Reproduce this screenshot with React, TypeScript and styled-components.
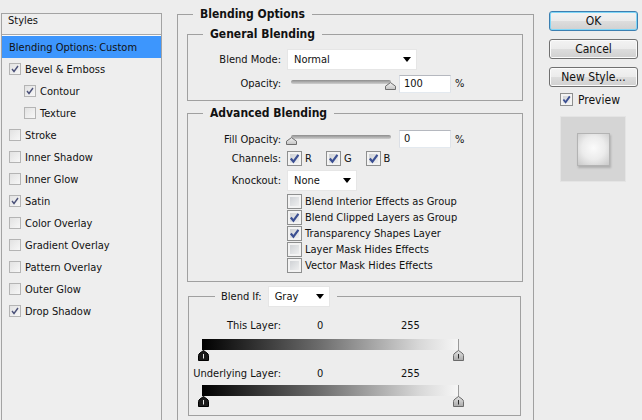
import React from "react";
import styled, { createGlobalStyle } from "styled-components";

const FONT = `"DejaVu Sans Condensed", "DejaVu Sans", "Liberation Sans", sans-serif`;

const GlobalStyle = createGlobalStyle`
  html, body { margin: 0; padding: 0; background: #ededed; }
  body { font-family: ${FONT}; font-stretch: condensed; font-size: 11px; color: #111; }
  * { box-sizing: border-box; }
`;

const Dialog = styled.div`
  display: flex;
  align-items: flex-start;
  width: 642px;
  height: 420px;
  overflow: hidden;
  background: #ededed;
`;

/* ---------- Styles list ---------- */
const StylesPanel = styled.div`
  flex: none;
  width: 161px;
  height: 440px;
  margin: 13px 0 0 1px;
  border: 1px solid #a3a3a3;
  background: #eeeeee;
`;

const PanelHeader = styled.div`
  height: 21px;
  padding: 0 0 0 6px;
  line-height: 14px;
  border-bottom: 1px solid #a9a9a9;
  box-shadow: 0 1px 0 #fbfbfb;
  margin-bottom: 1px;
`;

const StyleRow = styled.div<{ $indent?: boolean; $active?: boolean }>`
  height: 22px;
  display: flex;
  align-items: center;
  gap: 4px;
  padding-left: ${(p) => (p.$indent ? 22 : 7)}px;
  background: ${(p) => (p.$active ? "#3d96fd" : "transparent")};
  white-space: nowrap;
`;

const SmallBox = styled.span`
  flex: none;
  width: 12px;
  height: 12px;
  border: 1px solid #b4b4b4;
  background: linear-gradient(135deg, #e2e2e2, #f7f7f7);
  display: flex;
  align-items: center;
  justify-content: center;
`;

const WinBox = styled.span<{ $size: number }>`
  flex: none;
  width: ${(p) => p.$size}px;
  height: ${(p) => p.$size}px;
  border: 1px solid #8e8f8f;
  background: linear-gradient(135deg, #c9ccd0, #f5f5f5);
  box-shadow: inset 0 0 0 2px #f3f3f3;
  display: flex;
  align-items: center;
  justify-content: center;
`;

function SmallCheck({ checked }: { checked: boolean }) {
  return (
    <SmallBox>
      {checked && (
        <svg width="10" height="10" viewBox="0 0 10 10">
          <path d="M2 5 L4 7.5 L8 2" fill="none" stroke="#4b5179" strokeWidth="1.4" />
        </svg>
      )}
    </SmallBox>
  );
}

function WinCheck({ checked, size = 14 }: { checked: boolean; size?: number }) {
  return (
    <WinBox $size={size}>
      {checked && (
        <svg width={size - 2} height={size - 2} viewBox="0 0 12 12">
          <path d="M2.6 6 L5 9 L9.6 2.6" fill="none" stroke="#3b4f92" strokeWidth="2" />
        </svg>
      )}
    </WinBox>
  );
}

/* ---------- Group boxes ---------- */
const MainGroup = styled.fieldset`
  flex: none;
  min-width: 0;
  width: 357px;
  height: 440px;
  margin: 7px 0 0 15px;
  padding: 5px 10px 0 9px;
  border: 1px solid #a0a0a0;
`;

const GroupBody = styled.div`
  display: flex;
  flex-direction: column;
`;

const GroupTitle = styled.legend<{ $inset: number }>`
  margin-left: ${(p) => p.$inset}px;
  padding: 0 7px;
  font-weight: bold;
  font-size: 12px;
  line-height: 15px;
  color: #111;
`;

const SubGroup = styled.fieldset<{ $top?: number; $pt: number; $pb: number }>`
  min-width: 0;
  margin: ${(p) => p.$top ?? 0}px 0 0 0;
  padding: ${(p) => p.$pt}px 0 ${(p) => p.$pb}px 0;
  border: 1px solid #a0a0a0;
  display: block;
`;

const BlendIfGroup = styled.fieldset`
  min-width: 0;
  margin: 4px 2px 0 1px;
  padding: 11px 0 8px 0;
  border: 1px solid #a0a0a0;
`;

const BlendIfLegend = styled.legend`
  margin-left: 26px;
  padding: 0 7px 0 6px;
  display: flex;
  align-items: center;
  gap: 6px;
  height: 21px;
`;

const FormRow = styled.div<{ $h: number; $mt?: number }>`
  display: flex;
  align-items: center;
  height: ${(p) => p.$h}px;
  margin-top: ${(p) => p.$mt ?? 0}px;
  white-space: nowrap;
`;

const FieldLabel = styled.span`
  flex: none;
  width: 93px;
  margin-right: 6px;
  text-align: right;
`;

const Dropdown = styled.div<{ $w: number }>`
  flex: none;
  width: ${(p) => p.$w}px;
  height: 21px;
  background: #fff;
  border: 1px solid #e6e6e6;
  display: flex;
  align-items: center;
  justify-content: space-between;
  padding: 0 5px 0 6px;
`;

const DropArrow = styled.span`
  width: 0;
  height: 0;
  border-left: 4.5px solid transparent;
  border-right: 4.5px solid transparent;
  border-top: 5px solid #000;
`;

function Select({ value, width }: { value: string; width: number }) {
  return (
    <Dropdown $w={width}>
      <span>{value}</span>
      <DropArrow />
    </Dropdown>
  );
}

const NumberField = styled.div`
  flex: none;
  width: 52px;
  height: 18px;
  background: #fff;
  border: 1px solid;
  border-color: #b5b8bf #dfe3e9 #e3e9ef #dbdfe6;
  padding-left: 4px;
  line-height: 16px;
`;

const Unit = styled.span`
  margin-left: 4px;
`;

const SliderBox = styled.div`
  position: relative;
  flex: none;
  width: 108px;
  height: 20px;
  margin-right: 4px;
`;

const SliderTrack = styled.div`
  position: absolute;
  left: 4px;
  top: 6px;
  width: 100px;
  height: 4px;
  border-radius: 2px;
  background: linear-gradient(#8d8d8d, #cfcfcf);
`;

const SliderThumb = styled.svg`
  position: absolute;
  top: 8px;
`;

function Slider({ value }: { value: number }) {
  const left = 4 + (value / 100) * 99 - 5.5;
  return (
    <SliderBox>
      <SliderTrack />
      <SliderThumb width="11" height="8" viewBox="0 0 11 8" style={{ left }}>
        <defs>
          <linearGradient id="thumbg" x1="0" y1="0" x2="0" y2="1">
            <stop offset="0" stopColor="#f2f2f2" />
            <stop offset="1" stopColor="#c4c4c4" />
          </linearGradient>
        </defs>
        <path d="M0.5 7.5 V4.2 L5.5 0.6 L10.5 4.2 V7.5 Z" fill="url(#thumbg)" stroke="#6e6e6e" />
      </SliderThumb>
    </SliderBox>
  );
}

const ChannelItem = styled.span`
  display: flex;
  align-items: center;
  gap: 3px;
  margin-right: 14px;
`;

const CheckList = styled.div`
  display: flex;
  flex-direction: column;
  margin-top: 2px;
  padding-left: 99px;
`;

const CheckItem = styled.div`
  display: flex;
  align-items: center;
  gap: 3px;
  height: 16px;
  white-space: nowrap;
`;

/* ---------- Blend If ---------- */
const LayerRow = styled.div<{ $mt?: number }>`
  display: flex;
  align-items: center;
  height: 14px;
  margin-top: ${(p) => p.$mt ?? 0}px;
  white-space: nowrap;
`;

const LayerLabel = styled.span`
  width: 92px;
  text-align: right;
`;

const LayerValue = styled.span<{ $ml: number; $w: number }>`
  margin-left: ${(p) => p.$ml}px;
  width: ${(p) => p.$w}px;
`;

const BlendBar = styled.div<{ $mt: number }>`
  position: relative;
  width: 257px;
  height: 22px;
  margin: ${(p) => p.$mt}px 0 0 13px;
`;

const GradientStrip = styled.div`
  height: 11px;
  background: linear-gradient(to right, #000 0%, #6a6a6a 45%, #d8d8d8 85%, #f6f6f6 100%);
  border-right: 1px solid #9a9a9a;
`;

const BarTick = styled.div`
  position: absolute;
  right: 0;
  top: 11px;
  width: 1px;
  height: 1px;
  background: #9a9a9a;
`;

const BlendThumb = styled.svg<{ $side: "left" | "right" }>`
  position: absolute;
  top: 11px;
  ${(p) => (p.$side === "left" ? "left: -4px;" : "right: -5px;")}
`;

function BlendSlider({ mt }: { mt: number }) {
  return (
    <BlendBar $mt={mt}>
      <GradientStrip />
      <BarTick />
      <BlendThumb $side="left" width="11" height="11" viewBox="0 0 11 11">
        <path d="M0.5 10.5 V5.5 Q0.5 4 2 3 L5.5 0.5 L9 3 Q10.5 4 10.5 5.5 V10.5 Z" fill="#1b1b1b" stroke="#000" />
        <path d="M5.5 4 V8.5" stroke="#e8e8e8" strokeWidth="1" />
      </BlendThumb>
      <BlendThumb $side="right" width="11" height="11" viewBox="0 0 11 11">
        <defs>
          <linearGradient id="bthumb" x1="0" y1="0" x2="0" y2="1">
            <stop offset="0" stopColor="#e4e4e4" />
            <stop offset="1" stopColor="#a9a9a9" />
          </linearGradient>
        </defs>
        <path d="M0.5 10.5 V5.5 Q0.5 4 2 3 L5.5 0.5 L9 3 Q10.5 4 10.5 5.5 V10.5 Z" fill="url(#bthumb)" stroke="#6a6a6a" />
        <path d="M5.5 4 V8.5" stroke="#2a2a2a" strokeWidth="1" />
      </BlendThumb>
    </BlendBar>
  );
}

/* ---------- Buttons column ---------- */
const ButtonColumn = styled.div`
  flex: none;
  width: 89px;
  margin: 11px 0 0 15px;
  display: flex;
  flex-direction: column;
`;

const DialogButton = styled.div<{ $default?: boolean }>`
  height: 20px;
  margin-bottom: 8px;
  border: 1px solid ${(p) => (p.$default ? "#3c7fb1" : "#707070")};
  border-radius: 3px;
  background: linear-gradient(#f3f3f3 0%, #ebebeb 50%, #dddddd 51%, #d0d0d0 100%);
  box-shadow: inset 0 0 0 1px ${(p) => (p.$default ? "#7fd6f7" : "#fbfbfb")};
  font-size: 12px;
  line-height: 18px;
  text-align: center;
  white-space: nowrap;
  color: #111;
`;

const PreviewRow = styled.div`
  display: flex;
  align-items: center;
  gap: 5px;
  height: 13px;
  margin-top: -2px;
  padding-left: 11px;
  font-size: 12px;
`;

const PreviewSwatch = styled.div`
  width: 66px;
  height: 66px;
  margin: 10px 0 0 11px;
  background: #d5d5d5;
  border: 1px solid #e4e4e4;
  display: flex;
  align-items: center;
  justify-content: center;
`;

const PreviewTile = styled.div`
  width: 33px;
  height: 33px;
  border: 1px solid #b3b3b3;
  background: radial-gradient(circle at 50% 45%, #fbfbfb 0%, #ececec 50%, #c9c9c9 100%);
  box-shadow: 1px 2px 2px rgba(0, 0, 0, 0.18);
`;

const styleItems = [
  { label: "Bevel & Emboss", checked: true },
  { label: "Contour", checked: true, indent: true },
  { label: "Texture", checked: false, indent: true },
  { label: "Stroke", checked: false },
  { label: "Inner Shadow", checked: false },
  { label: "Inner Glow", checked: false },
  { label: "Satin", checked: true },
  { label: "Color Overlay", checked: false },
  { label: "Gradient Overlay", checked: false },
  { label: "Pattern Overlay", checked: false },
  { label: "Outer Glow", checked: false },
  { label: "Drop Shadow", checked: true },
];

const advancedChecks = [
  { label: "Blend Interior Effects as Group", checked: false },
  { label: "Blend Clipped Layers as Group", checked: true },
  { label: "Transparency Shapes Layer", checked: true },
  { label: "Layer Mask Hides Effects", checked: false },
  { label: "Vector Mask Hides Effects", checked: false },
];

export default function App() {
  return (
    <>
      <GlobalStyle />
      <Dialog>
        <StylesPanel>
          <PanelHeader>Styles</PanelHeader>
          <StyleRow $active>Blending Options:&thinsp;Custom</StyleRow>
          {styleItems.map((it) => (
            <StyleRow key={it.label} $indent={it.indent}>
              <SmallCheck checked={it.checked} />
              <span>{it.label}</span>
            </StyleRow>
          ))}
        </StylesPanel>

        <MainGroup>
          <GroupTitle $inset={6}>Blending Options</GroupTitle>
          <GroupBody>
            <SubGroup $pt={7} $pb={6}>
              <GroupTitle $inset={15}>General Blending</GroupTitle>
              <FormRow $h={21}>
                <FieldLabel>Blend Mode:</FieldLabel>
                <Select value="Normal" width={130} />
              </FormRow>
              <FormRow $h={21} $mt={3}>
                <FieldLabel>Opacity:</FieldLabel>
                <Slider value={100} />
                <NumberField>100</NumberField>
                <Unit>%</Unit>
              </FormRow>
            </SubGroup>

            <SubGroup $top={5} $pt={8} $pb={8}>
              <GroupTitle $inset={15}>Advanced Blending</GroupTitle>
              <FormRow $h={20}>
                <FieldLabel>Fill Opacity:</FieldLabel>
                <Slider value={0} />
                <NumberField>0</NumberField>
                <Unit>%</Unit>
              </FormRow>
              <FormRow $h={18}>
                <FieldLabel>Channels:</FieldLabel>
                {["R", "G", "B"].map((c) => (
                  <ChannelItem key={c}>
                    <WinCheck checked size={15} />
                    <span>{c}</span>
                  </ChannelItem>
                ))}
              </FormRow>
              <FormRow $h={21} $mt={3}>
                <FieldLabel>Knockout:</FieldLabel>
                <Select value="None" width={70} />
              </FormRow>
              <CheckList>
                {advancedChecks.map((c) => (
                  <CheckItem key={c.label}>
                    <WinCheck checked={c.checked} size={15} />
                    <span>{c.label}</span>
                  </CheckItem>
                ))}
              </CheckList>
            </SubGroup>

            <BlendIfGroup>
              <BlendIfLegend>
                <span>Blend If:</span>
                <Select value="Gray" width={62} />
              </BlendIfLegend>
              <LayerRow>
                <LayerLabel>This Layer:</LayerLabel>
                <LayerValue $ml={36} $w={84}>0</LayerValue>
                <span>255</span>
              </LayerRow>
              <BlendSlider mt={7} />
              <LayerRow $mt={5}>
                <LayerLabel>Underlying Layer:</LayerLabel>
                <LayerValue $ml={36} $w={84}>0</LayerValue>
                <span>255</span>
              </LayerRow>
              <BlendSlider mt={5} />
            </BlendIfGroup>
          </GroupBody>
        </MainGroup>

        <ButtonColumn>
          <DialogButton $default>OK</DialogButton>
          <DialogButton>Cancel</DialogButton>
          <DialogButton>New Style...</DialogButton>
          <PreviewRow>
            <WinCheck checked size={13} />
            <span>Preview</span>
          </PreviewRow>
          <PreviewSwatch>
            <PreviewTile />
          </PreviewSwatch>
        </ButtonColumn>
      </Dialog>
    </>
  );
}
